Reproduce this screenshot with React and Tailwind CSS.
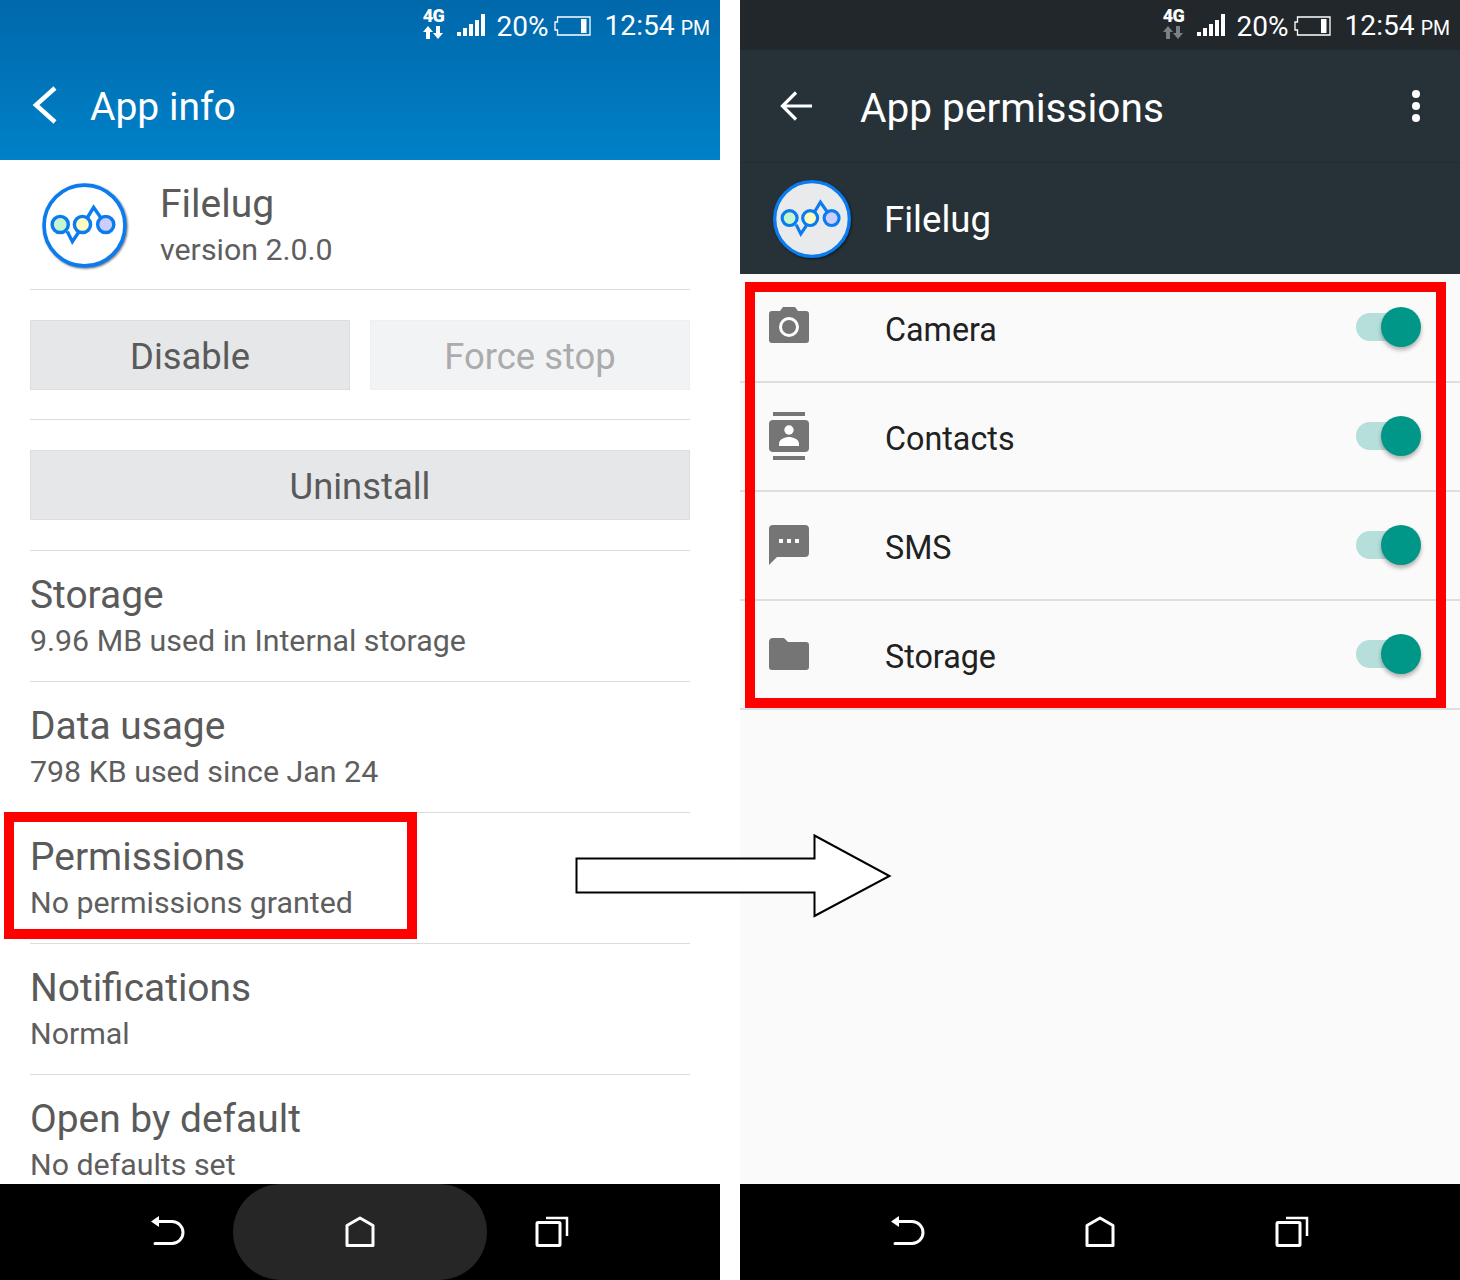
import React from "react";

const font = { fontFamily: "Roboto, sans-serif" };

function StatusBar({ dimArrows }) {
  const arrow = dimArrows ? "#7b8083" : "#ffffff";
  return (
    <div className="flex h-[50px] items-center justify-end pr-[10px] text-white">
      <div className="relative mr-[14px] h-[40px] w-[20px]">
        <span className="absolute left-[-2px] top-[1px] w-[24px] text-center text-[18px] leading-[20px] font-black tracking-[-0.5px]">
          4G
        </span>
        <svg className="absolute left-0 top-[21px]" width="20" height="14" viewBox="0 0 20 14">
          <path d="M5 0 L10 6 H7 V13 H3 V6 H0 Z M15 13 L10 7 H13 V0 H17 V7 H20 Z" fill={arrow} />
        </svg>
      </div>
      <svg className="mr-[11px] mt-[2px]" width="28" height="24" viewBox="0 0 28 24">
        <rect x="0" y="18" width="4" height="4" fill="#fff" />
        <rect x="6" y="14" width="4" height="8" fill="#fff" />
        <rect x="12" y="10" width="4" height="12" fill="#fff" />
        <rect x="18" y="6" width="4" height="16" fill="#fff" />
        <rect x="24" y="0" width="4" height="22" fill="#fff" />
      </svg>
      <span className="mr-[6px] mt-[4px] text-[28px] leading-[50px]">20%</span>
      <svg className="mr-[13px] mt-[1px]" width="37" height="20" viewBox="0 0 37 20">
        <path d="M3.5 1 H36 V19 H3.5 V14 H1 V6 H3.5 Z" fill="none" stroke="#fff" strokeWidth="1.3" />
        <rect x="27" y="3" width="5.5" height="14" fill="#fff" />
      </svg>
      <span className="mr-[6px] mt-[2px] text-[28.2px] leading-[50px]">12:54</span>
      <span className="mt-[7px] text-[19.5px] leading-[50px]">PM</span>
    </div>
  );
}

function NavBar({ pill }) {
  return (
    <div className="flex h-[96px] shrink-0 items-center justify-center bg-black">
      <div className="flex h-full w-[192px] items-center justify-center pr-[3px]">
        <svg width="36" height="36" viewBox="0 0 36 36" fill="none">
          <path d="M2 7.5 L10 2 V13 Z" fill="#fff" />
          <path d="M9 7.5 H23 A10.7 10.7 0 0 1 23 29.5 H6" stroke="#fff" strokeWidth="3" strokeLinecap="round" />
        </svg>
      </div>
      <div className="relative flex h-full w-[192px] items-center justify-center">
        {pill && <div className="absolute left-[-31px] top-0 h-[96px] w-[254px] rounded-[48px] bg-[#262626]" />}
        <svg className="relative" width="32" height="32" viewBox="0 0 32 32" fill="none">
          <path d="M3 29.5 V9.5 L16 2 L29 9.5 V29.5 Z" stroke="#fff" strokeWidth="3" strokeLinejoin="round" />
        </svg>
      </div>
      <div className="flex h-full w-[192px] items-center justify-center">
        <svg width="34" height="32" viewBox="0 0 34 32" fill="none">
          <rect x="2" y="6.5" width="23" height="23" rx="1" stroke="#fff" strokeWidth="3" />
          <path d="M11 2 H32 V20" stroke="#fff" strokeWidth="2.5" />
        </svg>
      </div>
    </div>
  );
}

function Logo({ size, fill }) {
  return (
    <svg
      className="drop-shadow-[1px_1.5px_1px_rgba(0,0,0,0.55)]"
      width={size}
      height={size}
      viewBox="-45 -45 90 90"
    >
      <circle cx="0" cy="0" r="40" fill={fill} stroke="#0a7cf0" strokeWidth="3.6" />
      <path d="M-17 6 L-12 16 L-6 7 M3 -8 L9 -18 L16 -8" fill="none" stroke="#0a7cf0" strokeWidth="3.4" />
      <circle cx="-24" cy="-1" r="8" fill="#c4f7cd" stroke="#0a7cf0" strokeWidth="3.4" />
      <circle cx="-2" cy="-1" r="8" fill="#fdfcbe" stroke="#0a7cf0" strokeWidth="3.4" />
      <circle cx="21" cy="-1" r="8" fill="#cccdfb" stroke="#0a7cf0" strokeWidth="3.4" />
    </svg>
  );
}

function InfoRow({ title, sub, last }) {
  return (
    <div className={`mx-[30px] h-[131px] pt-[21px] ${last ? "" : "border-b border-[#dcdcdc]"}`}>
      <div className="text-[38.9px] leading-[46px] text-[#5a5a5a]">{title}</div>
      <div className="mt-[1px] text-[30.35px] leading-[44px] text-[#5e5e5e]">{sub}</div>
    </div>
  );
}

function AppInfo() {
  return (
    <div className="flex h-full w-[720px] flex-col bg-white">
      <div className="h-[160px] shrink-0 bg-gradient-to-b from-[#0068ab] to-[#0081c8]">
        <StatusBar />
        <div className="flex h-[110px] items-center pl-[31px]">
          <svg width="28" height="38" viewBox="0 0 28 38" fill="none">
            <path d="M24 2 L5 19 L24 36" stroke="#fff" strokeWidth="4.5" />
          </svg>
          <span className="ml-[31px] mt-[5px] text-[39px] text-white">App info</span>
        </div>
      </div>

      <div className="min-h-0 flex-1 overflow-hidden">
        <div className="mx-[30px] flex h-[130px] items-center border-b border-[#dcdcdc]">
          <div className="ml-[9px] mt-[2px]">
            <Logo size={91} fill="#ffffff" />
          </div>
          <div className="ml-[30px] mt-[3px]">
            <div className="text-[39px] leading-[46px] text-[#5a5a5a]">Filelug</div>
            <div className="mt-[1px] text-[30.35px] leading-[44px] text-[#5e5e5e]">version 2.0.0</div>
          </div>
        </div>

        <div className="mx-[30px] flex h-[130px] items-center gap-[20px] border-b border-[#dcdcdc]">
          <div className="flex h-[70px] flex-1 items-center justify-center border border-[#dcdde0] bg-[#e6e7e9] pt-[5px] text-[36.4px] text-[#5a5a5a]">
            Disable
          </div>
          <div className="flex h-[70px] flex-1 items-center justify-center border border-[#eeeff0] bg-[#f2f3f4] pt-[5px] text-[36.4px] text-[#ababab]">
            Force stop
          </div>
        </div>

        <div className="mx-[30px] flex h-[131px] items-center border-b border-[#dcdcdc]">
          <div className="flex h-[70px] flex-1 items-center justify-center border border-[#dcdde0] bg-[#e6e7e9] pt-[5px] text-[36.4px] text-[#5a5a5a]">
            Uninstall
          </div>
        </div>

        <InfoRow title="Storage" sub="9.96 MB used in Internal storage" />
        <InfoRow title="Data usage" sub="798 KB used since Jan 24" />
        <InfoRow title="Permissions" sub="No permissions granted" />
        <InfoRow title="Notifications" sub="Normal" />
        <InfoRow title="Open by default" sub="No defaults set" last />
      </div>

      <NavBar pill />
    </div>
  );
}

function CameraIcon() {
  return (
    <svg width="40" height="48" viewBox="0 0 40 48">
      <path d="M11 8 L14 4 H26 L29 8 H37 A3 3 0 0 1 40 11 V37 A3 3 0 0 1 37 40 H3 A3 3 0 0 1 0 37 V11 A3 3 0 0 1 3 8 Z" fill="#757575" />
      <circle cx="20" cy="24" r="8.5" fill="none" stroke="#fff" strokeWidth="3" />
    </svg>
  );
}

function ContactsIcon() {
  return (
    <svg width="40" height="48" viewBox="0 0 40 48">
      <rect x="4" y="0" width="32" height="4" fill="#757575" />
      <rect x="0" y="8" width="40" height="32" rx="4" fill="#757575" />
      <rect x="4" y="44" width="32" height="4" fill="#757575" />
      <circle cx="20" cy="18" r="4.7" fill="#fff" />
      <path d="M10 34 V32 C10 27 16 25 20 25 S30 27 30 32 V34 Z" fill="#fff" />
    </svg>
  );
}

function SmsIcon() {
  return (
    <svg width="40" height="48" viewBox="0 0 40 48">
      <path d="M4 4 H36 A4 4 0 0 1 40 8 V32 A4 4 0 0 1 36 36 H8 L0 44 V8 A4 4 0 0 1 4 4 Z" fill="#757575" />
      <rect x="10" y="18" width="4" height="4" fill="#fff" />
      <rect x="18" y="18" width="4" height="4" fill="#fff" />
      <rect x="26" y="18" width="4" height="4" fill="#fff" />
    </svg>
  );
}

function FolderIcon() {
  return (
    <svg width="40" height="48" viewBox="0 0 40 48">
      <path d="M4 8 H15 L19 12 H37 A3 3 0 0 1 40 15 V37 A3 3 0 0 1 37 40 H3 A3 3 0 0 1 0 37 V12 A4 4 0 0 1 4 8 Z" fill="#757575" />
    </svg>
  );
}

function PermRow({ icon, label }) {
  return (
    <div className="flex h-[109px] items-center border-b-2 border-[#dedede] pb-[2px] pl-[29px] pr-[39px]">
      <div className="w-[40px]">{icon}</div>
      <span className="ml-[76px] mt-[8px] flex-1 text-[32.3px] text-[#212121]">{label}</span>
      <div className="relative h-[40px] w-[65px]">
        <div className="absolute left-0 top-[6px] h-[28px] w-[54px] rounded-full bg-[#b6dfdb]" />
        <div className="absolute right-0 top-0 h-[40px] w-[40px] rounded-full bg-[#009688] shadow-[0_3px_4px_rgba(0,0,0,0.3)]" />
      </div>
    </div>
  );
}

function Permissions() {
  return (
    <div className="flex h-full w-[720px] flex-col bg-[#fafafa]">
      <div className="shrink-0 bg-[#21272b]">
        <StatusBar dimArrows />
      </div>
      <div className="flex h-[113px] shrink-0 items-center border-b border-[#222b30] bg-[#263238] pl-[40px] pr-[40px] text-white">
        <svg width="32" height="30" viewBox="0 0 32 30" fill="none">
          <path d="M32 15 H3 M16 1.5 L2.5 15 L16 28.5" stroke="#fff" strokeWidth="3.2" />
        </svg>
        <span className="ml-[48px] mt-[4px] flex-1 text-[40.6px]">App permissions</span>
        <div className="flex flex-col gap-[4px]">
          <div className="h-[8px] w-[8px] rounded-full bg-white" />
          <div className="h-[8px] w-[8px] rounded-full bg-white" />
          <div className="h-[8px] w-[8px] rounded-full bg-white" />
        </div>
      </div>
      <div className="flex h-[111px] shrink-0 items-center bg-[#263238] pl-[30px] text-white">
        <Logo size={84} fill="#e8eaec" />
        <span className="ml-[30px] mt-[3px] text-[36.6px]">Filelug</span>
      </div>
      <div className="min-h-0 flex-1">
        <PermRow icon={<CameraIcon />} label="Camera" />
        <PermRow icon={<ContactsIcon />} label="Contacts" />
        <PermRow icon={<SmsIcon />} label="SMS" />
        <PermRow icon={<FolderIcon />} label="Storage" />
      </div>
      <NavBar />
    </div>
  );
}

export default function App() {
  return (
    <div className="relative flex h-[1280px] w-[1460px] justify-between overflow-hidden bg-white" style={font}>
      <AppInfo />
      <Permissions />

      {/* callouts drawn over the two screens */}
      <div className="absolute left-[4px] top-[812px] h-[127px] w-[413px] border-[10px] border-[#ff0000]" />
      <div className="absolute left-[745px] top-[282px] h-[426px] w-[701px] border-[10px] border-[#ff0000]" />
      <svg className="absolute left-[570px] top-[830px]" width="326" height="92" viewBox="570 830 326 92">
        <path d="M576.5 858.5 H814.5 V835.5 L889.5 876 L814.5 916 V892.5 H576.5 Z" fill="#fff" stroke="#000" strokeWidth="2" />
      </svg>
    </div>
  );
}
